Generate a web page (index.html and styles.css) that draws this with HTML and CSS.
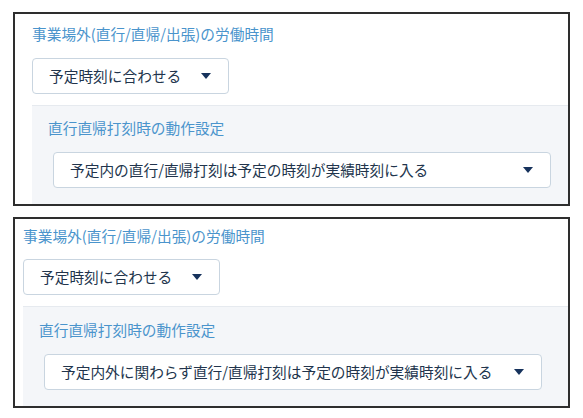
FILE: index.html
```html
<!DOCTYPE html>
<html lang="ja">
<head>
<meta charset="utf-8">
<link rel="stylesheet" href="styles.css">
</head>
<body>
<div class="page">
  <section class="panel panel-a">
    <div class="title">事業場外(直行/直帰/出張)の労働時間</div>
    <div class="select select-short"><span class="label">予定時刻に合わせる</span><span class="arrow"></span></div>
    <div class="sub">
      <div class="subtitle">直行直帰打刻時の動作設定</div>
      <div class="select select-long"><span class="label">予定内の直行/直帰打刻は予定の時刻が実績時刻に入る</span><span class="arrow"></span></div>
    </div>
  </section>
  <section class="panel panel-b">
    <div class="title">事業場外(直行/直帰/出張)の労働時間</div>
    <div class="select select-short"><span class="label">予定時刻に合わせる</span><span class="arrow"></span></div>
    <div class="sub">
      <div class="subtitle">直行直帰打刻時の動作設定</div>
      <div class="select select-long"><span class="label">予定内外に関わらず直行/直帰打刻は予定の時刻が実績時刻に入る</span><span class="arrow"></span></div>
    </div>
  </section>
</div>
</body>
</html>
```
FILE: styles.css
```css
* { box-sizing: border-box; }
html, body { margin: 0; padding: 0; background: #fff; }
body {
  font-family: "Noto Sans CJK JP", "Noto Sans", sans-serif;
  font-size: 14.7px;
  color: #1f3650;
}
.page {
  padding: 12px 13px 0 13px;
  width: 583px;
  display: flex;
  flex-direction: column;
  gap: 11px;
}
.panel {
  width: 557px;
  border: 2px solid #2e2e2e;
  display: flex;
  flex-direction: column;
  align-items: flex-start;
}
.panel-a { padding: 10px 0 0 17px; }
.panel-b { padding: 7px 0 0 8px; }
.title {
  color: #4a94cc;
  line-height: 20px;
  height: 20px;
}
.panel-a .title { margin-bottom: 14px; }
.panel-b .title { margin-bottom: 13px; }
.select {
  height: 36px;
  border: 1px solid #c9d5e0;
  border-radius: 4px;
  background: #fff;
  display: flex;
  align-items: center;
  padding: 0 17px 0 16px;
}
.select .label { line-height: 20px; color: #21344c; }
.select .arrow {
  margin-left: auto;
  width: 0;
  height: 0;
  border-left: 5.5px solid transparent;
  border-right: 5.5px solid transparent;
  border-top: 6px solid #16325c;
}
.select-short { width: 197px; }
.select-long { width: 498px; margin-left: 5px; }
.sub {
  margin-top: 11px;
  align-self: stretch;
  background: #f4f6f9;
  border-top: 1px solid #e6eaef;
  padding: 12px 0 16px 16px;
  display: flex;
  flex-direction: column;
  align-items: flex-start;
}
.panel-b .sub { padding-top: 13px; }
.subtitle {
  color: #4a94cc;
  line-height: 20px;
  height: 20px;
  margin-bottom: 14px;
}
```
